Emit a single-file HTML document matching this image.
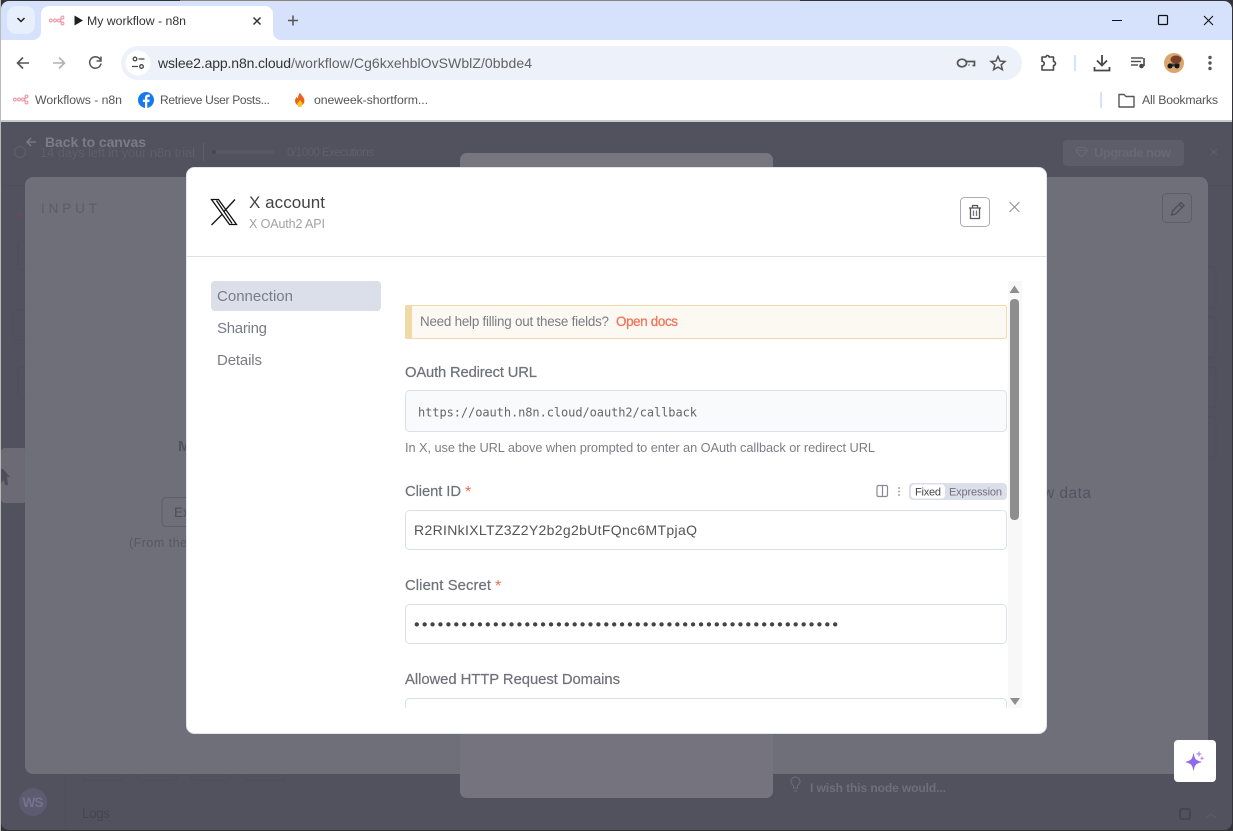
<!DOCTYPE html>
<html><head><meta charset="utf-8"><title>My workflow - n8n</title>
<style>
html,body{margin:0;padding:0;width:1233px;height:831px;overflow:hidden;background:#2e2d30}
svg{position:absolute;left:0;top:0;display:block}
text{font-family:"Liberation Sans",sans-serif;white-space:pre}
.m{font-family:"DejaVu Sans Mono","Liberation Mono",monospace}
</style></head><body>
<svg width="1233" height="831" viewBox="0 0 1233 831" xmlns="http://www.w3.org/2000/svg">
<defs>
<clipPath id="win"><path d="M1 9a8 8 0 0 1 8-8H1224a8 8 0 0 1 8 8V822a8 8 0 0 1-8 8H9a8 8 0 0 1-8-8z"/></clipPath>
<clipPath id="body"><rect x="405" y="281" width="603" height="427"/></clipPath>
<g id="n8n" fill="none" stroke="#ee98aa" stroke-width="1.100"><circle cx="1.800" cy="5.500" r="1.400"/><circle cx="6" cy="5.500" r="1.400"/><circle cx="10" cy="5.500" r="1.400"/><circle cx="13.500" cy="2.500" r="1.400"/><circle cx="13.500" cy="8.500" r="1.400"/><path d="M11.400 5.500c1 0 .4-3 1-3M11.400 5.500c1 0 .4 3 1 3"/></g>
</defs>
<rect width="1233" height="831" fill="#333236"/>
<rect x="180" y="0" width="620" height="1" fill="#8b8478"/>
<rect x="0" y="0" width="1" height="831" fill="#b9b9b9"/>
<g clip-path="url(#win)">
<!-- chrome -->
<rect width="1233" height="40" fill="#d6e2fb"/>
<rect y="40" width="1233" height="81" fill="#fff"/>
<rect y="120" width="1233" height="2" fill="#c9c9cc"/>
<rect x="7" y="6" width="28" height="28" rx="9" fill="#e7eefc"/>
<path d="M17.500 18l3.500 3.500 3.500-3.500" fill="none" stroke="#1f1f1f" stroke-width="1.500"/>
<path d="M33 40a8 8 0 0 0 8-8V14a8 8 0 0 1 8-8H265a8 8 0 0 1 8 8V32a8 8 0 0 0 8 8z" fill="#fff"/>
<use href="#n8n" x="49" y="15"/>
<path d="M74.500 15.500l8.500 5-8.500 5z" fill="#1f1f1f"/>
<text x="87" y="25" font-size="12.300" textLength="99" fill="#333">My workflow - n8n</text>
<path d="M253.500 17.500l7 7M260.500 17.500l-7 7" stroke="#333" stroke-width="1.500"/>
<path d="M293 15.500v10M288 20.500h10" stroke="#555" stroke-width="1.500"/>
<path d="M1112 20.500h10" stroke="#111" stroke-width="1.100"/>
<rect x="1158.500" y="15.500" width="9" height="9" rx="1" fill="none" stroke="#111" stroke-width="1.200"/>
<path d="M1204 16l9 9M1213 16l-9 9" stroke="#111" stroke-width="1.100"/>
<!-- toolbar -->
<path d="M29 63H18M23 57.500l-5.500 5.500 5.500 5.500" fill="none" stroke="#555" stroke-width="1.600"/>
<path d="M53 63H64M59 57.500l5.500 5.500-5.500 5.500" fill="none" stroke="#b0b2b4" stroke-width="1.600"/>
<path d="M100.500 60a5.700 5.700 0 1 0 .5 3.500M101 56.500v4.500h-4.500" fill="none" stroke="#555" stroke-width="1.500"/>
<rect x="121" y="46" width="901" height="34" rx="17" fill="#edf2fa"/>
<circle cx="138" cy="63" r="12.500" fill="#fff"/>
<g fill="none" stroke="#474747" stroke-width="1.300"><circle cx="135" cy="59" r="1.800"/><path d="M138.500 59h6M132 66.500h6"/><circle cx="141.500" cy="66.500" r="1.800"/></g>
<text x="158" y="68" font-size="14" textLength="133" fill="#333">wslee2.app.n8n.cloud</text>
<text x="291" y="68" font-size="14" textLength="241" fill="#5f6368">/workflow/Cg6kxehblOvSWblZ/0bbde4</text>
<g fill="none" stroke="#555" stroke-width="1.700"><ellipse cx="962" cy="63" rx="4.500" ry="3.800"/><path d="M966.500 61.500h8v4h-2M969 64.500v1"/></g>
<path d="M998 56.500l2 4.600 5 .4-3.800 3.300 1.200 4.900-4.400-2.600-4.400 2.600 1.200-4.900-3.800-3.300 5-.4z" fill="none" stroke="#555" stroke-width="1.500"/>
<path d="M1042 57h4a1.500 1.500 0 0 1 1.500-1.500h0a1.500 1.500 0 0 1 1.500 1.500h4.500v4.500a2 2 0 0 1 2 2 2 2 0 0 1-2 2V70H1042v-4.200a2 2 0 0 0 0-4.500z" fill="none" stroke="#474747" stroke-width="1.600" stroke-linejoin="round"/>
<rect x="1074" y="55" width="2" height="16" fill="#d3e3fd"/>
<path d="M1102 55v10M1097 60.500l5 5 5-5M1094.500 67v3.500h15V67" fill="none" stroke="#474747" stroke-width="1.800"/>
<path d="M1131 58h12M1131 61.500h10M1131 65h7" stroke="#555" stroke-width="1.400"/><path d="M1144 58v8" stroke="#474747" stroke-width="1.600"/><circle cx="1141.500" cy="66" r="2.300" fill="#474747"/>
<circle cx="1174" cy="63" r="10" fill="#dba66d"/>
<ellipse cx="1176" cy="59.500" rx="5.500" ry="4" fill="#79402c"/>
<path d="M1169 63.500h11l-1 3h-9z" fill="#2d4a45"/><circle cx="1170" cy="66" r="2.500" fill="#161616"/><circle cx="1177" cy="66" r="2.500" fill="#161616"/>
<circle cx="1210" cy="57.500" r="1.700" fill="#555"/><circle cx="1210" cy="63" r="1.700" fill="#555"/><circle cx="1210" cy="68.500" r="1.700" fill="#555"/>
<!-- bookmarks -->
<use href="#n8n" x="13" y="94"/>
<text x="35" y="104" font-size="12.300" textLength="87" fill="#555">Workflows - n8n</text>
<circle cx="146" cy="100" r="8" fill="#1877f2"/><path d="M147.300 108v-6h2l.4-2.400h-2.400v-1.400c0-.8.3-1.300 1.300-1.300h1.200v-2.100c-.5-.1-1.100-.2-1.700-.2-1.900 0-3.100 1.100-3.100 3.200v1.800h-2.100V102h2.100v6z" fill="#fff"/>
<text x="160" y="104" font-size="12" textLength="110" fill="#555">Retrieve User Posts...</text>
<path d="M300 92.500c1 3 4.500 4.500 4.500 8.500a4.800 5.800 0 0 1-9.500 0c0-2 1-3 1.600-4.200.4 1 .8 1.400 1.300 1.600.2-2.200.8-4.300 2.100-5.900z" fill="#e8641b"/><path d="M300 100c1 1.500 2.300 2.300 2.300 4.100a2.500 3 0 0 1-5 0c0-1.700 1.800-2.400 2.700-4.100z" fill="#f9c623"/>
<text x="314" y="104" font-size="12.300" textLength="114" fill="#555">oneweek-shortform...</text>
<rect x="1100" y="92" width="2" height="16" fill="#d3e3fd"/>
<path d="M1119 94.500h5l2 2h8v10.500h-15z" fill="none" stroke="#555" stroke-width="1.400" stroke-linejoin="round"/>
<text x="1142" y="104" font-size="12.300" textLength="76" fill="#555">All Bookmarks</text>

<!-- dim app background -->
<rect y="122" width="1233" height="709" fill="#52515e"/>
<g stroke="#4f4e5b" fill="none">
<path d="M0 185.500H1233M65.500 185V831"/>
<rect x="18" y="240" width="20" height="30" rx="4"/><rect x="13" y="310" width="20" height="30" rx="4"/><rect x="18" y="367" width="20" height="30" rx="4"/>
<rect x="1190" y="267" width="26" height="41" rx="4"/><rect x="1190" y="317" width="26" height="41" rx="4"/><rect x="1190" y="367" width="26" height="41" rx="4"/><rect x="1190" y="417" width="26" height="41" rx="4"/>
<rect x="82.500" y="760" width="41" height="20.500" rx="4"/><rect x="136.500" y="760" width="41" height="20.500" rx="4"/><rect x="190.500" y="760" width="41" height="20.500" rx="4"/><rect x="244.500" y="760" width="41" height="20.500" rx="4"/>
</g>
<path d="M27 142h9M31 138l-4 4 4 4" fill="none" stroke="#7f7e88" stroke-width="1.300"/>
<text x="45" y="147" font-size="14" font-weight="700" textLength="101" fill="#7c7b85">Back to canvas</text>
<circle cx="20" cy="152" r="5.500" fill="none" stroke="#605f6b"/>
<text x="40" y="157" font-size="13" textLength="155" fill="#5f5e6a">14 days left in your n8n trial</text>
<rect x="203" y="143" width="1" height="18" fill="#605f6b"/>
<rect x="212" y="150" width="62" height="4" rx="2" fill="#585764"/><circle cx="214" cy="152" r="2" fill="#454450"/>
<text x="287" y="156" font-size="11.500" textLength="87" fill="#605f6b">0/1000 Executions</text>
<rect x="1063" y="140" width="121" height="26" rx="4" fill="#5c5d69"/>
<path d="M1078 147.500h7l2.500 3-6 6.500-6-6.500zM1075.500 150.500h12" fill="none" stroke="#686874" stroke-width="1.200"/>
<text x="1094" y="157" font-size="13" font-weight="700" textLength="77" fill="#686874">Upgrade now</text>
<path d="M1211 149l6 6M1217 149l-6 6" stroke="#605f6b" stroke-width="1"/>
<rect x="1" y="448" width="26" height="55" rx="4" fill="#6b6a75"/>
<path d="M3 469l7 8-3 0 1 8h-3l-1-5-3 3v-14z" fill="#4e4d59"/>
<circle cx="33" cy="802" r="14" fill="#5c5b72"/>
<text x="22.500" y="807" font-size="13.500" font-weight="700" textLength="21" fill="#74738a">WS</text>
<text x="82" y="818" font-size="13.500" textLength="28" fill="#45444f">Logs</text>
<path d="M793.500 788v-2.500a4.500 4.500 0 1 1 4 0V788zM794 791h3" fill="none" stroke="#6c6b76"/>
<text x="810" y="792" font-size="12" font-weight="700" textLength="136" fill="#6f6e79">I wish this node would...</text>
<rect x="1180" y="809" width="10" height="10" rx="2" fill="none" stroke="#454450" stroke-width="2"/>
<path d="M1206 818l5-4 5 4" fill="none" stroke="#5f5e6a"/>
<!-- panels -->
<rect x="460" y="153" width="313" height="645" rx="7" fill="#77767f"/>
<rect x="25" y="177" width="1183" height="597" rx="8" fill="#6f6f7a"/>
<rect x="460" y="700" width="313" height="98" rx="7" fill="#75747e"/>
<text x="41" y="213" font-size="13.500" textLength="56" fill="#5c5b67">INPUT</text>
<circle cx="20" cy="215" r="2" fill="none" stroke="#6e4a5c"/>
<text x="178" y="451" font-size="15" font-weight="700" fill="#52515d">M</text>
<rect x="162" y="497.500" width="40" height="29" rx="4" fill="none" stroke="#5f5e6a"/>
<text x="174" y="517" font-size="13.500" fill="#4e4d59">Ex</text>
<text x="129" y="547" font-size="12.500" textLength="58" fill="#585763">(From the</text>
<text x="1043" y="498" font-size="15.500" textLength="48" fill="#53525e">w data</text>
<rect x="1162.500" y="193.500" width="29" height="29" rx="4" fill="none" stroke="#5e5d69"/>
<path d="M1171.500 215l1-4 8.500-8.500 3 3-8.500 8.500zM1179 204.500l3 3" fill="none" stroke="#4d4c58" stroke-width="1.300"/>
<!-- sparkle button -->
<rect x="1174" y="740" width="42" height="42" rx="4" fill="#fff"/>
<path d="M1193.500 754c.6 5 2.400 7 7.500 8-5.100 1-6.900 3-7.500 8-.6-5-2.400-7-7.500-8 5.100-1 6.900-3 7.500-8z" fill="#8d6be8" stroke="#8d6be8" stroke-width=".8" stroke-linejoin="round"/>
<path d="M1199 751.500v5M1196.500 754h5" stroke="#9a75e8" stroke-width="1"/>
<path d="M1202 756.500v3.500M1200.300 758.200h3.500" stroke="#d77fd0" stroke-width="1"/>
<!-- modal -->
<rect x="186.500" y="167.500" width="860" height="566" rx="8" fill="#fff" stroke="#e4e4ee"/>
<path d="M211.500 199.500h7l18 25h-7z" fill="#fff" stroke="#111" stroke-width="1.300" stroke-linejoin="miter"/>
<path d="M235 199.500l-11.500 12.500M222 214.500L211.500 225M216.500 200.500l15.500 23" fill="none" stroke="#111" stroke-width="1.300"/>
<text x="249" y="208" font-size="17" textLength="76" fill="#444">X account</text>
<text x="249" y="228" font-size="12.500" textLength="76" fill="#a1a1a9">X OAuth2 API</text>
<rect x="960.500" y="197.500" width="29" height="29" rx="4" fill="#fff" stroke="#a9abb8"/>
<path d="M969 208h12M970.500 208v10.500h9V208M972.500 207.500v-2h5v2" fill="none" stroke="#55555e" stroke-width="1.300"/>
<path d="M973.500 210.500v5.500M976.500 210.500v5.500" stroke="#77777f" stroke-width="1.300"/>
<path d="M1009.500 202l10 10M1019.500 202l-10 10" stroke="#8f8f98" stroke-width="1.100"/>
<rect x="187" y="256" width="859" height="1" fill="#dddfe9"/>
<rect x="211" y="281" width="170" height="30" rx="4" fill="#dbdfe9"/>
<text x="217" y="301" font-size="15" textLength="76" fill="#7b7b85">Connection</text>
<text x="217" y="333" font-size="15" textLength="50" fill="#7b7b85">Sharing</text>
<text x="217" y="365" font-size="15" textLength="45" fill="#7b7b85">Details</text>
<!-- scrollbar -->
<rect x="1008" y="281" width="14" height="427" fill="#f8f8f8"/>
<rect x="1010" y="299" width="9" height="221" rx="4" fill="#8e8e8e"/>
<path d="M1014.500 285.500l5 7.500h-10z" fill="#8e8e8e"/>
<path d="M1010 698h10l-5 7z" fill="#8e8e8e"/>
<g clip-path="url(#body)">
<rect x="405.500" y="305.500" width="601" height="33" rx="2" fill="#fcf9f2" stroke="#f2dba8"/>
<rect x="405" y="305" width="7" height="34" rx="2" fill="#f0d9a6"/>
<text x="420" y="326" font-size="13.400" textLength="189" fill="#7b7b85">Need help filling out these fields?</text>
<text x="616" y="326" font-size="13.400" textLength="62" fill="#f0755a" stroke="#f0755a" stroke-width=".3">Open docs</text>
<text x="405" y="377" font-size="14.800" textLength="132" fill="#70707a" stroke="#70707a" stroke-width=".2">OAuth Redirect URL</text>
<rect x="405.500" y="390.500" width="601" height="41" rx="4" fill="#f9fafc" stroke="#dbdfe9"/>
<text class="m" x="418" y="416.500" font-size="12" textLength="279" fill="#666">https://oauth.n8n.cloud/oauth2/callback</text>
<text x="405" y="452" font-size="12.800" textLength="470" fill="#7d7d87">In X, use the URL above when prompted to enter an OAuth callback or redirect URL</text>
<text x="405" y="496" font-size="14.800" textLength="56" fill="#70707a" stroke="#70707a" stroke-width=".2">Client ID</text>
<text x="465" y="497" font-size="16" fill="#ef6c50">*</text>
<rect x="877" y="485.500" width="10.500" height="11" rx="1.500" fill="none" stroke="#8a8a92" stroke-width="1.200"/><path d="M882.500 485.500v11" stroke="#8a8a92" stroke-width="1.200"/>
<circle cx="899" cy="488" r=".9" fill="#8a8a92"/><circle cx="899" cy="491.500" r=".9" fill="#8a8a92"/><circle cx="899" cy="495" r=".9" fill="#8a8a92"/>
<rect x="909" y="483" width="98" height="17" rx="4" fill="#dbdfe9"/>
<rect x="911" y="484.500" width="34" height="14" rx="3.500" fill="#fff"/>
<text x="915" y="495.500" font-size="11" textLength="26" fill="#444">Fixed</text>
<text x="949" y="495.500" font-size="11" textLength="53" fill="#6f7080">Expression</text>
<rect x="405.500" y="510.500" width="601" height="39" rx="4" fill="#fff" stroke="#dbdfe9"/>
<text x="414" y="535" font-size="14" textLength="283" fill="#555">R2RINkIXLTZ3Z2Y2b2g2bUtFQnc6MTpjaQ</text>
<text x="405" y="590" font-size="14.800" textLength="86" fill="#70707a" stroke="#70707a" stroke-width=".2">Client Secret</text>
<text x="495" y="591" font-size="16" fill="#ef6c50">*</text>
<rect x="405.500" y="604.500" width="601" height="39" rx="4" fill="#fff" stroke="#dbdfe9"/>
<text x="414" y="629.500" font-size="16" textLength="424" fill="#444">••••••••••••••••••••••••••••••••••••••••••••••••••••••</text>
<text x="405" y="684" font-size="14.800" textLength="215" fill="#70707a" stroke="#70707a" stroke-width=".2">Allowed HTTP Request Domains</text>
<rect x="405.500" y="698.500" width="601" height="40" rx="4" fill="#fff" stroke="#dbdfe9"/>
</g>
</g>
</svg>
</body></html>
